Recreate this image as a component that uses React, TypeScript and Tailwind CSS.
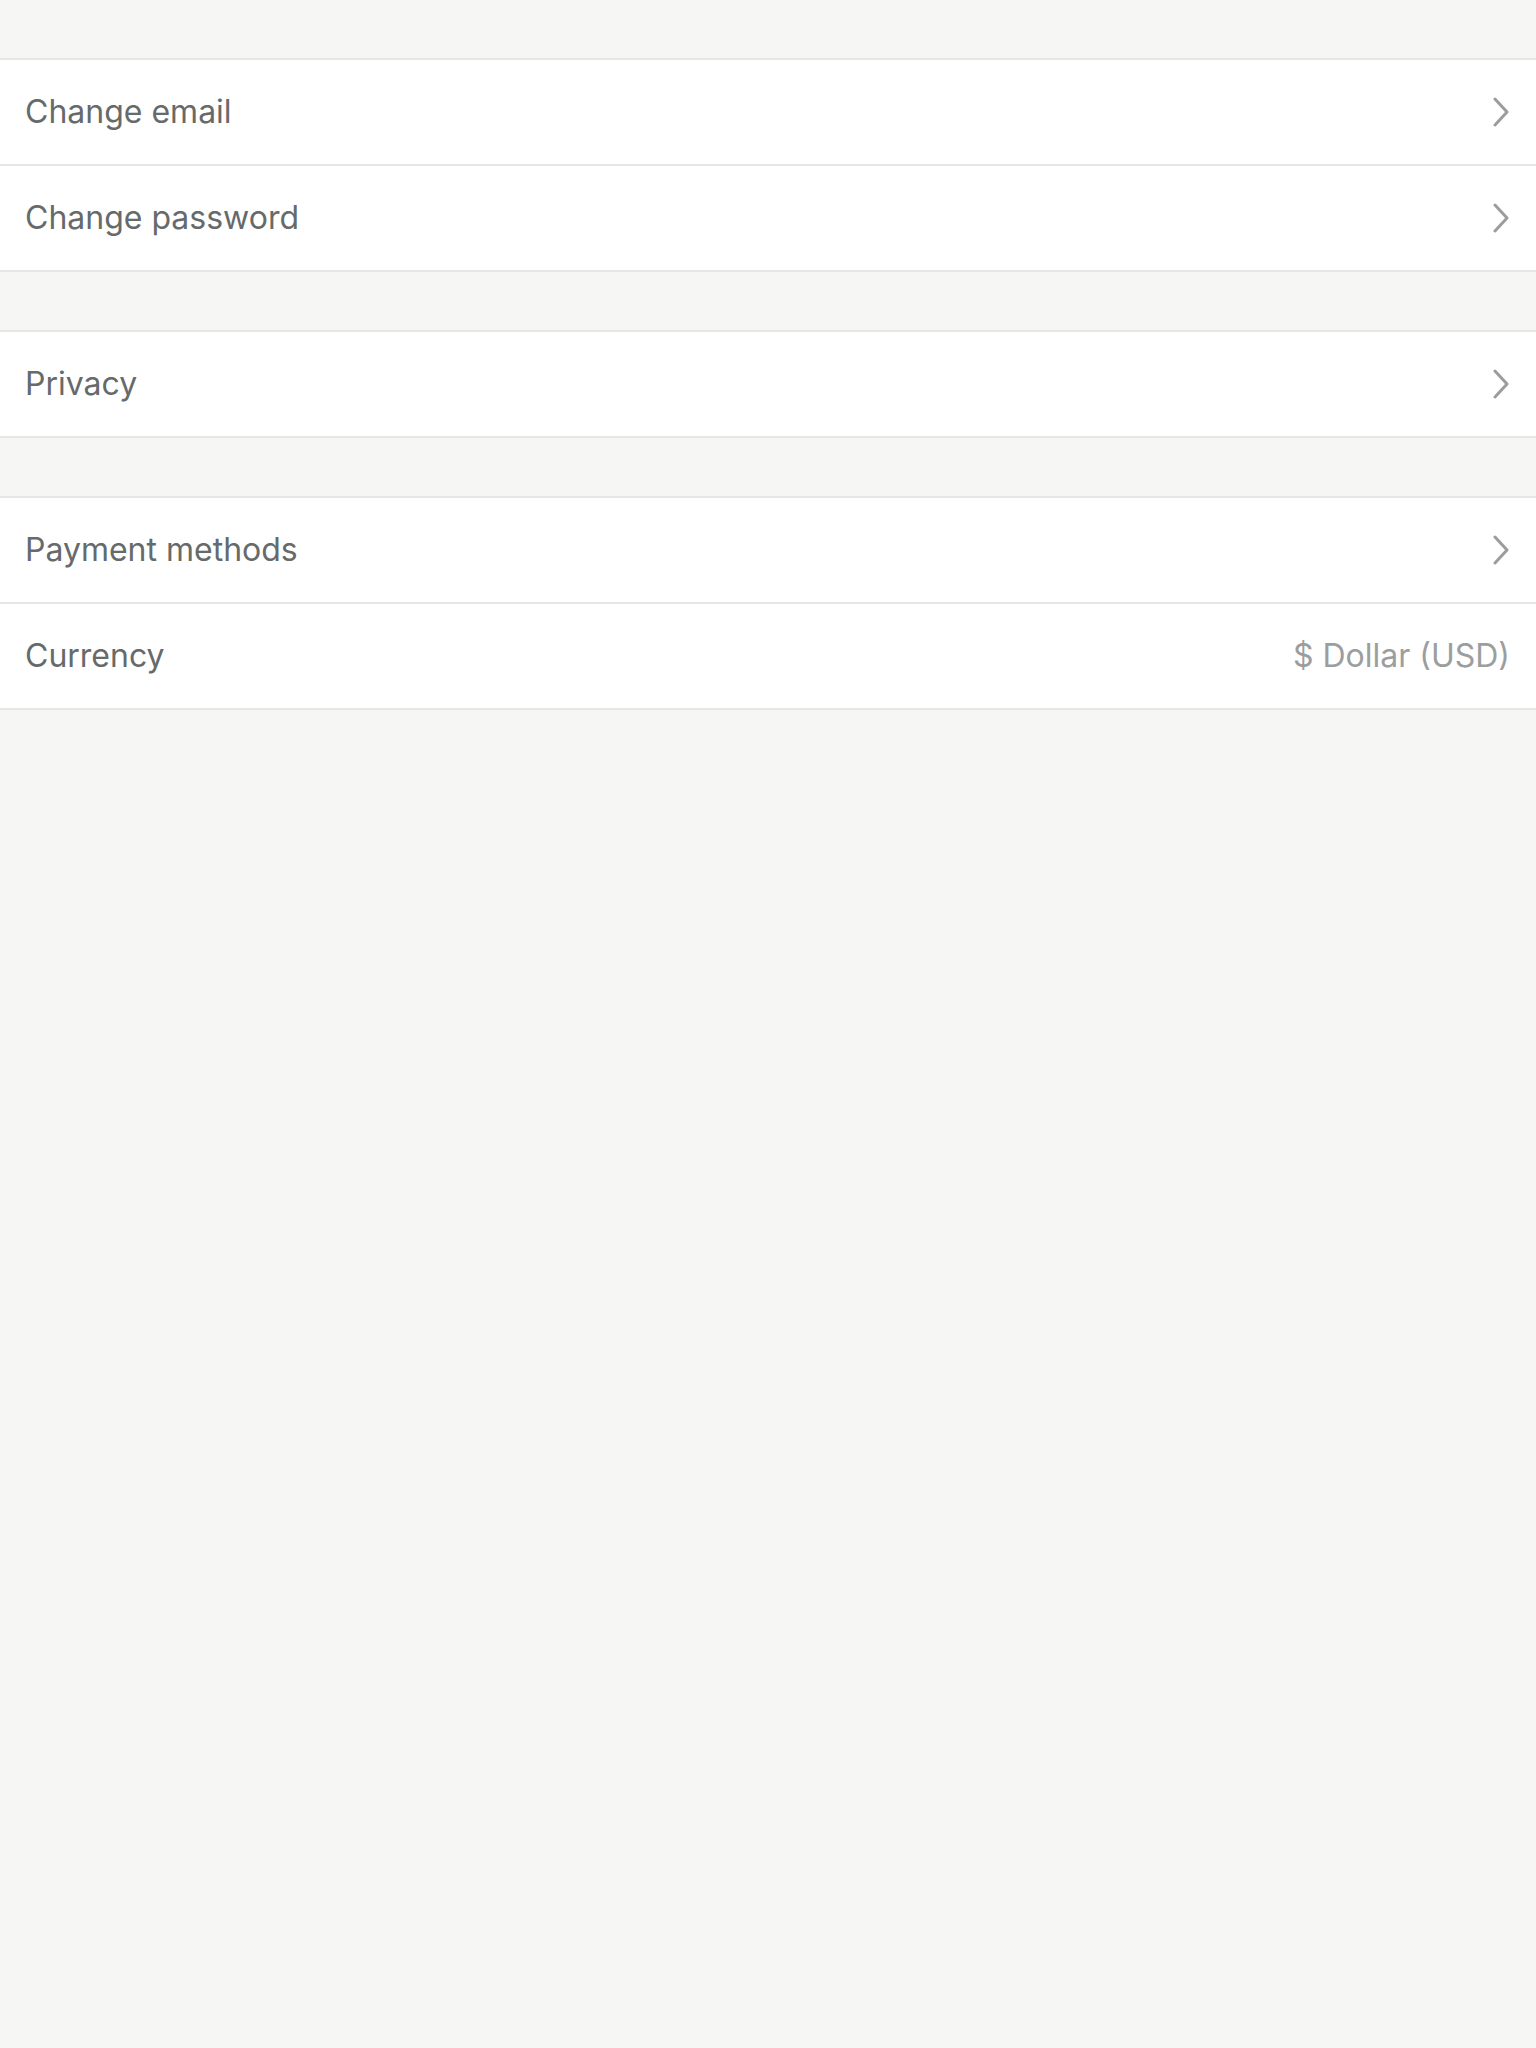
import React from "react";

const Chevron = () => (
  <svg width="18" height="30" viewBox="0 0 18 30" fill="none">
    <path
      d="M3 2 L15 15 L3 28"
      stroke="#9b9d9d"
      strokeWidth="3"
      strokeLinecap="round"
      strokeLinejoin="round"
    />
  </svg>
);

const Row = ({
  label,
  value,
  last,
}: {
  label: string;
  value?: string;
  last?: boolean;
}) => {
  return (
    <div
      className={`box-content flex items-center justify-between h-[104px] pl-[25px] pr-[26px] bg-white ${
        last ? "" : "border-b-2 border-[#e6e6e6]"
      }`}
    >
      <span className="text-[32px] text-[#666a6a]">{label}</span>
      {value ? (
        <span className="text-[32px] text-[#9b9e9e]">{value}</span>
      ) : (
        <Chevron />
      )}
    </div>
  );
};

const Section = ({ children }: { children: React.ReactNode }) => {
  return (
    <div className="border-y-2 border-[#e6e6e6] bg-white">{children}</div>
  );
};

const App = () => {
  return (
    <div
      className="min-h-[2048px] bg-[#f6f6f4] pt-[58px] flex flex-col gap-[58px]"
      style={{ fontFamily: "Inter, 'Noto Sans', sans-serif" }}
    >
      <Section>
        <Row label="Change email" />
        <Row label="Change password" last />
      </Section>
      <Section>
        <Row label="Privacy" last />
      </Section>
      <Section>
        <Row label="Payment methods" />
        <Row label="Currency" value="$ Dollar (USD)" last />
      </Section>
    </div>
  );
};

export default App;
